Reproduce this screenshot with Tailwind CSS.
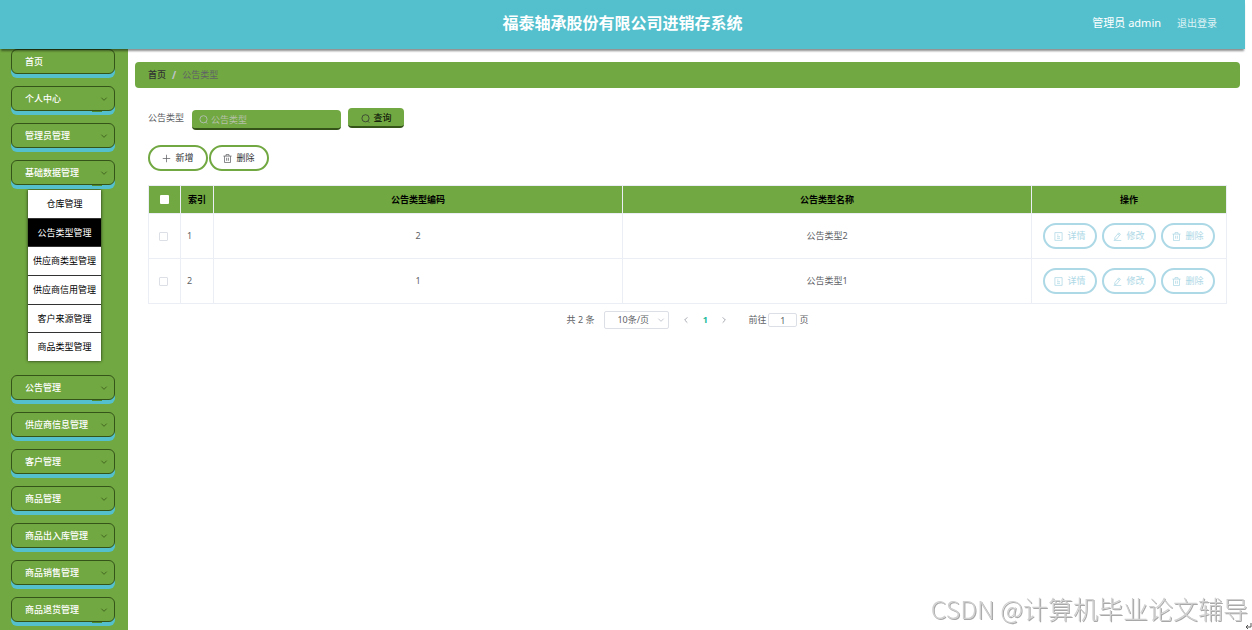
<!DOCTYPE html>
<html lang="zh-CN">
<head>
    <meta charset="UTF-8">
    <meta name="viewport" content="width=device-width, initial-scale=1.0">
    <title>福泰轴承股份有限公司进销存系统</title>
    <script src="https://cdn.jsdelivr.net/npm/@tailwindcss/browser@4"></script>
</head>
<body class="bg-white pr-[7px] font-['Noto_Sans','Noto_Sans_CJK_SC',sans-serif] text-[9px] leading-3 text-[#606266]">

    <!-- Icons -->
    <svg class="hidden">
        <symbol id="i-down" viewBox="0 0 12 12"><path d="M2 4l4 4 4-4" fill="none" stroke="currentColor" stroke-width="1.4"/></symbol>
        <symbol id="i-left" viewBox="0 0 12 12"><path d="M8 2L4 6l4 4" fill="none" stroke="currentColor" stroke-width="1.4"/></symbol>
        <symbol id="i-right" viewBox="0 0 12 12"><path d="M4 2l4 4-4 4" fill="none" stroke="currentColor" stroke-width="1.4"/></symbol>
        <symbol id="i-search" viewBox="0 0 12 12"><g fill="none" stroke="currentColor"><circle cx="6" cy="5.7" r="4.8"/><path d="M9 9.5l2 2"/></g></symbol>
        <symbol id="i-plus" viewBox="0 0 12 12"><path d="M6 1v10M1 6h10" fill="none" stroke="currentColor"/></symbol>
        <symbol id="i-trash" viewBox="0 0 12 12"><path d="M.5 2.8h11M4 2.8V.8h4v2M2 2.8v8.5h8V2.8M4.8 5v4M7.2 5v4" fill="none" stroke="currentColor"/></symbol>
        <symbol id="i-doc" viewBox="0 0 12 12"><path d="M1.2.8h9.6v10.4H1.2zM4 4h2M4 6.3h4M4 8.5h4" fill="none" stroke="currentColor"/></symbol>
        <symbol id="i-edit" viewBox="0 0 12 12"><path d="M7.5 1.2l2.4 1.6L5 9.3l-2.8 1 .3-2.8zM6.5 2.8l2.3 1.6M1 11.3h10" fill="none" stroke="currentColor"/></symbol>
    </svg>

    <div class="flex min-h-screen flex-col">
        <!-- Header -->
        <header class="relative z-10 flex h-[49px] items-center bg-[#54c0cd] px-7 pb-[3px] text-white shadow-[0_3px_2px_-1px_rgba(0,0,0,0.45)]">
            <div class="flex-1"></div>
            <h1 class="text-base font-bold">福泰轴承股份有限公司进销存系统</h1>
            <div class="flex flex-1 items-center justify-end gap-4 text-[11px]">
                <span>管理员 admin</span>
                <a href="#" class="text-[10px] text-white/80">退出登录</a>
            </div>
        </header>

        <div class="flex flex-1">
            <!-- Sidebar -->
            <nav class="w-32 shrink-0 bg-[#71a841] pr-[13px] pl-[11px] text-white">
                <ul class="flex flex-col gap-3 font-medium">
                    <li><a href="#" class="flex h-[25px] items-center rounded-md border border-[#35541a] bg-[#71a841] px-[13px] shadow-[0_4px_0_#54c0cd]">首页</a></li>
                    <li><a href="#" class="relative flex h-[25px] items-center justify-between rounded-md border border-[#35541a] bg-[#71a841] pl-[13px] pr-1.5 shadow-[0_4px_0_#54c0cd]">个人中心<svg class="size-2 text-[#3f611f]"><use href="#i-down"/></svg><span class="absolute -bottom-0.5 right-3 h-px w-2.5 bg-[#4f8a2c]"></span></a></li>
                    <li><a href="#" class="flex h-[25px] items-center justify-between rounded-md border border-[#35541a] bg-[#71a841] pl-[13px] pr-1.5 shadow-[0_4px_0_#54c0cd]">管理员管理<svg class="size-2 text-[#3f611f]"><use href="#i-down"/></svg></a></li>
                    <li>
                        <a href="#" class="relative flex h-[25px] items-center justify-between rounded-md border border-[#35541a] bg-[#71a841] pl-[13px] pr-1.5 shadow-[0_4px_0_#54c0cd]">基础数据管理<svg class="size-2 text-[#3f611f]"><use href="#i-down"/></svg><span class="absolute -bottom-0.5 right-3 h-px w-2.5 bg-[#4f8a2c]"></span></a>
                        <ul class="mt-[5px] mr-3.5 mb-0.5 ml-[17px] flex h-[171px] flex-col divide-y divide-[#333] bg-white text-center font-normal text-black shadow-[0_0_3px_rgba(0,0,0,0.8)]">
                            <li class="flex flex-1"><a href="#" class="m-auto">仓库管理</a></li>
                            <li class="flex flex-1 bg-black text-white"><a href="#" class="m-auto">公告类型管理</a></li>
                            <li class="flex flex-1"><a href="#" class="m-auto">供应商类型管理</a></li>
                            <li class="flex flex-1"><a href="#" class="m-auto">供应商信用管理</a></li>
                            <li class="flex flex-1"><a href="#" class="m-auto">客户来源管理</a></li>
                            <li class="flex flex-1"><a href="#" class="m-auto">商品类型管理</a></li>
                        </ul>
                    </li>
                    <li><a href="#" class="relative flex h-[25px] items-center justify-between rounded-md border border-[#35541a] bg-[#71a841] pl-[13px] pr-1.5 shadow-[0_4px_0_#54c0cd]">公告管理<svg class="size-2 text-[#3f611f]"><use href="#i-down"/></svg><span class="absolute -bottom-0.5 right-3 h-px w-2.5 bg-[#4f8a2c]"></span></a></li>
                    <li><a href="#" class="flex h-[25px] items-center justify-between rounded-md border border-[#35541a] bg-[#71a841] pl-[13px] pr-1.5 shadow-[0_4px_0_#54c0cd]">供应商信息管理<svg class="size-2 text-[#3f611f]"><use href="#i-down"/></svg></a></li>
                    <li><a href="#" class="flex h-[25px] items-center justify-between rounded-md border border-[#35541a] bg-[#71a841] pl-[13px] pr-1.5 shadow-[0_4px_0_#54c0cd]">客户管理<svg class="size-2 text-[#3f611f]"><use href="#i-down"/></svg></a></li>
                    <li><a href="#" class="flex h-[25px] items-center justify-between rounded-md border border-[#35541a] bg-[#71a841] pl-[13px] pr-1.5 shadow-[0_4px_0_#54c0cd]">商品管理<svg class="size-2 text-[#3f611f]"><use href="#i-down"/></svg></a></li>
                    <li><a href="#" class="flex h-[25px] items-center justify-between rounded-md border border-[#35541a] bg-[#71a841] pl-[13px] pr-1.5 shadow-[0_4px_0_#54c0cd]">商品出入库管理<svg class="size-2 text-[#3f611f]"><use href="#i-down"/></svg></a></li>
                    <li><a href="#" class="flex h-[25px] items-center justify-between rounded-md border border-[#35541a] bg-[#71a841] pl-[13px] pr-1.5 shadow-[0_4px_0_#54c0cd]">商品销售管理<svg class="size-2 text-[#3f611f]"><use href="#i-down"/></svg></a></li>
                    <li><a href="#" class="relative flex h-[25px] items-center justify-between rounded-md border border-[#35541a] bg-[#71a841] pl-[13px] pr-1.5 shadow-[0_4px_0_#54c0cd]">商品退货管理<svg class="size-2 text-[#3f611f]"><use href="#i-down"/></svg><span class="absolute -bottom-0.5 right-3 h-px w-2.5 bg-[#4f8a2c]"></span></a></li>
                </ul>
            </nav>

            <main class="min-w-0 flex-1 pt-[13px] pl-[7px] pr-[5px]">
                <!-- Breadcrumb -->
                <div class="flex h-[26px] items-center gap-1.5 rounded-sm bg-[#71a841] px-[13px]">
                    <a href="#" class="font-medium text-[#303133]">首页</a>
                    <span class="text-[10px] font-bold text-[#c0c4cc]">/</span>
                    <span>公告类型</span>
                </div>

                <div class="px-[13px] pt-5">
                    <!-- Search -->
                    <form class="flex items-start">
                        <label for="type-name" class="mr-2 pt-1">公告类型</label>
                        <div class="relative mt-0.5 mr-[7px]">
                            <svg class="absolute top-[5px] left-[7px] size-[9px] text-[#c0c4cc]"><use href="#i-search"/></svg>
                            <input id="type-name" type="text" placeholder="公告类型" class="block h-5 w-[149px] rounded-sm border-b-2 border-[#35541a] bg-[#71a841] pl-[19px] placeholder:text-[#b5c0a8] outline-none">
                        </div>
                        <button type="button" class="flex h-5 w-14 items-center justify-center gap-1 rounded-sm border-b-2 border-[#35541a] bg-[#71a841] pt-0.5 text-black"><svg class="size-[9px] text-[#303133]"><use href="#i-search"/></svg>查询</button>
                    </form>

                    <div class="mt-[15px] flex gap-px">
                        <button type="button" class="flex h-[26px] w-[60px] items-center justify-center gap-1 rounded-full border-2 border-[#71a841] text-[#303133]"><svg class="size-[9px] text-[#606266]"><use href="#i-plus"/></svg>新增</button>
                        <button type="button" class="flex h-[26px] w-[60px] items-center justify-center gap-1 rounded-full border-2 border-[#71a841] text-[#303133]"><svg class="size-[9px] text-[#606266]"><use href="#i-trash"/></svg>删除</button>
                    </div>

                    <!-- Table -->
                    <table class="mt-3.5 w-full table-fixed border-collapse text-center">
                        <colgroup>
                            <col class="w-[32px]"><col class="w-[33px]"><col><col><col class="w-[195px]">
                        </colgroup>
                        <thead>
                            <tr class="h-7 bg-[#71a841] font-bold text-black">
                                <th class="border border-[#ebeef5]"><input type="checkbox" aria-label="全选" class="mx-auto block size-[9px] appearance-none rounded-[1px] bg-white"></th>
                                <th class="border border-[#ebeef5]">索引</th>
                                <th class="border border-[#ebeef5]">公告类型编码</th>
                                <th class="border border-[#ebeef5]">公告类型名称</th>
                                <th class="border border-[#ebeef5]">操作</th>
                            </tr>
                        </thead>
                        <tbody>
                            <tr class="h-[45px]">
                                <td class="border border-[#ebeef5]"><input type="checkbox" aria-label="选择第1行" class="ml-2.5 block size-[9px] appearance-none rounded-[1px] border border-[#dcdfe6]"></td>
                                <td class="border border-[#ebeef5] pl-1.5 text-left">1</td>
                                <td class="border border-[#ebeef5]">2</td>
                                <td class="border border-[#ebeef5]">公告类型2</td>
                                <td class="border border-[#ebeef5]">
                                    <div class="flex justify-center gap-[5px] text-[#add8e6]">
                                        <button type="button" class="flex h-[26px] w-[54px] items-center justify-center gap-1 rounded-full border-2"><svg class="size-[9px]"><use href="#i-doc"/></svg>详情</button>
                                        <button type="button" class="flex h-[26px] w-[54px] items-center justify-center gap-1 rounded-full border-2"><svg class="size-[9px]"><use href="#i-edit"/></svg>修改</button>
                                        <button type="button" class="flex h-[26px] w-[54px] items-center justify-center gap-1 rounded-full border-2"><svg class="size-[9px]"><use href="#i-trash"/></svg>删除</button>
                                    </div>
                                </td>
                            </tr>
                            <tr class="h-[45px]">
                                <td class="border border-[#ebeef5]"><input type="checkbox" aria-label="选择第2行" class="ml-2.5 block size-[9px] appearance-none rounded-[1px] border border-[#dcdfe6]"></td>
                                <td class="border border-[#ebeef5] pl-1.5 text-left">2</td>
                                <td class="border border-[#ebeef5]">1</td>
                                <td class="border border-[#ebeef5]">公告类型1</td>
                                <td class="border border-[#ebeef5]">
                                    <div class="flex justify-center gap-[5px] text-[#add8e6]">
                                        <button type="button" class="flex h-[26px] w-[54px] items-center justify-center gap-1 rounded-full border-2"><svg class="size-[9px]"><use href="#i-doc"/></svg>详情</button>
                                        <button type="button" class="flex h-[26px] w-[54px] items-center justify-center gap-1 rounded-full border-2"><svg class="size-[9px]"><use href="#i-edit"/></svg>修改</button>
                                        <button type="button" class="flex h-[26px] w-[54px] items-center justify-center gap-1 rounded-full border-2"><svg class="size-[9px]"><use href="#i-trash"/></svg>删除</button>
                                    </div>
                                </td>
                            </tr>
                        </tbody>
                    </table>

                    <!-- Pagination -->
                    <div class="mt-[7px] flex items-center justify-center">
                        <span>共 2 条</span>
                        <div class="relative ml-2.5">
                            <select aria-label="每页条数" class="block h-[18px] w-[65px] appearance-none rounded-xs border border-[#dcdfe6] pl-3">
                                <option>10条/页</option>
                            </select>
                            <svg class="pointer-events-none absolute top-[5px] right-1 size-2 text-[#c0c4cc]"><use href="#i-down"/></svg>
                        </div>
                        <button type="button" aria-label="上一页" class="ml-[13px]"><svg class="size-2 text-[#a0a4ac]"><use href="#i-left"/></svg></button>
                        <button type="button" class="w-[30px] font-bold text-[#1abc9c]">1</button>
                        <button type="button" aria-label="下一页" class="mr-5"><svg class="size-2 text-[#a0a4ac]"><use href="#i-right"/></svg></button>
                        <label for="page-no">前往</label>
                        <input id="page-no" type="text" value="1" class="mx-0.5 h-[14px] w-[29px] rounded-xs border border-[#dcdfe6] text-center">
                        <span>页</span>
                    </div>
                </div>
            </main>
        </div>
    </div>

    <!-- Watermark -->
    <div class="pointer-events-none fixed right-1 bottom-1 font-['Noto_Sans_CJK_SC',sans-serif] text-[25px] leading-9 font-light text-[#d0d0d0] [text-shadow:1px_1px_0_#a8a8a8]">CSDN @计算机毕业论文辅导</div>
    <svg class="fixed right-0 bottom-0 size-2 text-[#555]" viewBox="0 0 8 8"><path d="M7 1v4H2M4 3L2 5l2 2" fill="none" stroke="currentColor"/></svg>
</body>
</html>
